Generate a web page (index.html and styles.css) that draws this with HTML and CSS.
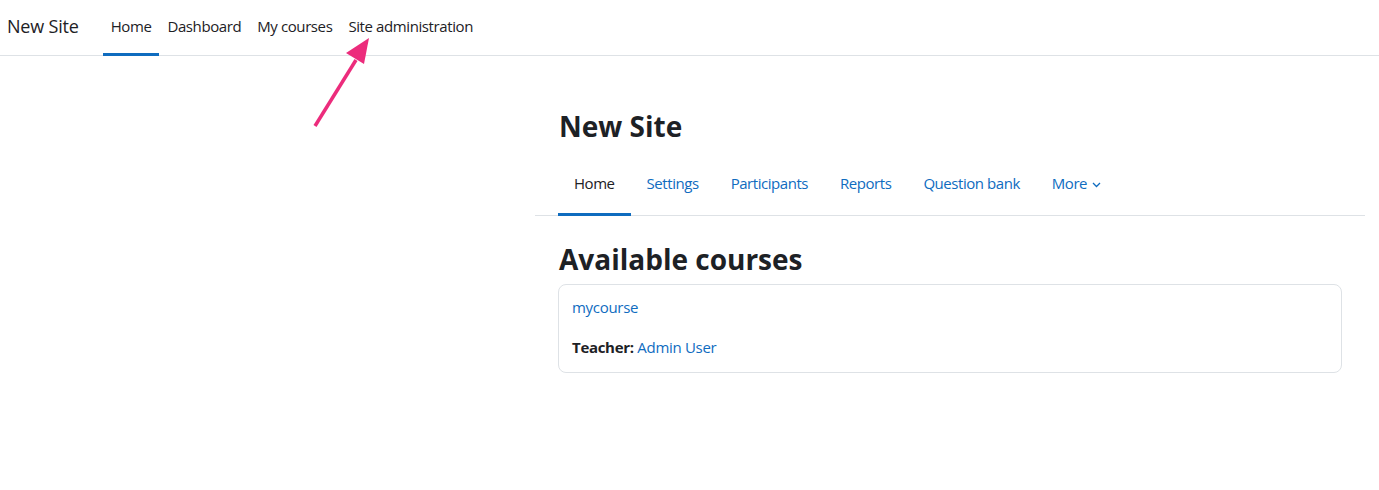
FILE: index.html
```html
<!DOCTYPE html>
<html lang="en">
<head>
    <meta charset="UTF-8">
    <title>New Site</title>
    <link rel="stylesheet" href="styles.css">
</head>
<body>
    <!-- Top navbar -->
    <header class="navbar">
        <a class="brand" href="#">New Site</a>
        <nav class="primary-nav">
            <a class="active" href="#">Home</a>
            <a href="#">Dashboard</a>
            <a href="#">My courses</a>
            <a href="#">Site administration</a>
        </nav>
    </header>

    <!-- Annotation arrow -->
    <svg class="arrow" width="80" height="100" viewBox="0 0 80 100">
        <line x1="5" y1="88" x2="46" y2="22" stroke="#ec2c7c" stroke-width="3.5"/>
        <polygon points="59,0 36,15 54,26" fill="#ec2c7c"/>
    </svg>

    <div class="page">
        <main class="main">
            <h1 class="page-title">New Site</h1>
            <nav class="secondary-nav">
                <a class="active" href="#">Home</a>
                <a href="#">Settings</a>
                <a href="#">Participants</a>
                <a href="#">Reports</a>
                <a href="#">Question bank</a>
                <a href="#">More <svg class="chev" width="9" height="6" viewBox="0 0 9 6"><path d="M1 1l3.5 3.5L8 1" fill="none" stroke="currentColor" stroke-width="1.3"/></svg></a>
            </nav>

            <section class="courses">
                <h2>Available courses</h2>
                <div class="course-card">
                    <a href="#" class="course-name">mycourse</a>
                    <div class="teacher"><strong>Teacher:</strong> <a href="#">Admin User</a></div>
                </div>
            </section>
        </main>
    </div>
</body>
</html>
```

FILE: styles.css
```css
:root {
    --text-color: #1d2125;
    --link-color: #0f6cbf;
    --border-color: #dee2e6;
    --font-family: 'Open Sans', 'Noto Sans', sans-serif;
}

body {
    margin: 0;
    padding: 0;
    background-color: white;
    font-family: var(--font-family);
    font-size: 15px;
    color: var(--text-color);
}

a {
    text-decoration: none;
}

/* Top navbar */
.navbar {
    display: flex;
    align-items: stretch;
    height: 56px;
    border-bottom: 1px solid var(--border-color);
    box-sizing: border-box;
    padding-left: 7px;
}

.brand {
    color: var(--text-color);
    font-size: 18px;
    letter-spacing: -0.2px;
    line-height: 53px;
    margin-right: 24px;
}

.primary-nav {
    display: flex;
}

.primary-nav a {
    color: var(--text-color);
    padding: 0 8px;
    line-height: 52px;
    letter-spacing: -0.4px;
    border-bottom: 3px solid transparent;
    margin-bottom: -1px;
}

.primary-nav a.active {
    border-bottom-color: var(--link-color);
}

.arrow {
    position: absolute;
    left: 310px;
    top: 38px;
}

/* Main region */
.page {
    padding-left: 535px;
    padding-right: 14px;
}

.main {
    padding-top: 50px;
}

.page-title {
    font-size: 28px;
    font-weight: 700;
    margin: 0 0 0 24px;
    line-height: 40px;
}

.secondary-nav {
    display: flex;
    margin-top: 16px;
    padding-left: 23px;
    border-bottom: 1px solid var(--border-color);
}

.secondary-nav a {
    color: var(--link-color);
    padding: 0 16px 9px;
    line-height: 42px;
    letter-spacing: -0.45px;
    border-bottom: 3px solid transparent;
    margin-bottom: -1px;
}

.secondary-nav a.active {
    color: var(--text-color);
    border-bottom-color: var(--link-color);
}

.chev {
    vertical-align: middle;
    margin-left: 1px;
}

.courses {
    padding: 0 23px 0 23px;
}

.courses h2 {
    font-size: 28px;
    font-weight: 700;
    margin: 25px 0 7px 1px;
    line-height: 36px;
}

.course-card {
    border: 1px solid var(--border-color);
    border-radius: 8px;
    padding: 11px 13px 14px;
}

.course-name {
    color: var(--link-color);
    display: block;
    line-height: 22px;
    letter-spacing: -0.3px;
}

.teacher {
    margin-top: 18px;
    line-height: 22px;
    letter-spacing: -0.3px;
}

.teacher a {
    color: var(--link-color);
}
```
